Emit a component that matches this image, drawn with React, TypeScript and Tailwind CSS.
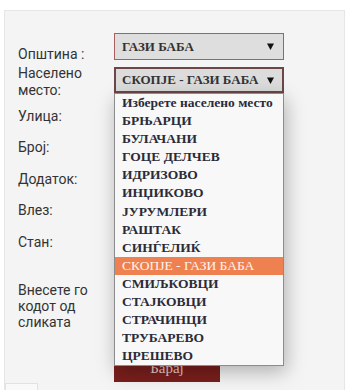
import React from "react";

const items = [
  "Изберете населено место",
  "БРЊАРЦИ",
  "БУЛАЧАНИ",
  "ГОЦЕ ДЕЛЧЕВ",
  "ИДРИЗОВО",
  "ИНЏИКОВО",
  "ЈУРУМЛЕРИ",
  "РАШТАК",
  "СИНЃЕЛИЌ",
  "СКОПЈЕ - ГАЗИ БАБА",
  "СМИЉКОВЦИ",
  "СТАЈКОВЦИ",
  "СТРАЧИНЦИ",
  "ТРУБАРЕВО",
  "ЦРЕШЕВО",
];

function Arrow() {
  return (
    <svg width="7" height="7" viewBox="0 0 7 7" className="shrink-0">
      <polygon points="0,0.5 7,0.5 3.5,7" fill="#111" />
    </svg>
  );
}

export default function App() {
  const serif = { fontFamily: '"Liberation Serif", "DejaVu Serif", serif' };
  return (
    <div className="w-[349px] h-[390px] bg-white overflow-hidden pt-[10px] pl-[4px]">
      <div
        className="w-[341px] h-[420px] bg-[#f4f4f4] border border-[#e6e6e6] pt-[22px] pl-[13px] flex"
        style={{ fontFamily: 'Roboto, "Liberation Sans", sans-serif' }}
      >
        <div className="w-[96px] flex flex-col text-[14px] text-[#333] leading-[16px]">
          <div className="mt-[13px]">Општина :</div>
          <div className="mt-[3px] leading-[17px]">
            Населено
            <br />
            место:
          </div>
          <div className="mt-[9px]">Улица:</div>
          <div className="mt-[15px]">Број:</div>
          <div className="mt-[16px]">Додаток:</div>
          <div className="mt-[15px]">Влез:</div>
          <div className="mt-[16px]">Стан:</div>
          <div className="mt-[32px]">
            Внесете го
            <br />
            кодот од
            <br />
            сликата
          </div>
          <div className="mt-[53px] -ml-[13px] w-[33px] h-[20px] bg-[#f9f9f9] border border-[#e2e2e2]" />
        </div>
        <div className="w-[170px] flex flex-col" style={serif}>
          <div className="h-[27px] bg-[#dedede] border border-[#a95f5f] flex items-center justify-between pl-[7px] pr-[9px] text-[13px] font-bold text-[#333]">
            <span>ГАЗИ БАБА</span>
            <Arrow />
          </div>
          <div className="relative mt-[7px] z-10">
            <div className="h-[26px] bg-[#dcdcdc] border-2 border-[#6b4747] flex items-center justify-between pl-[6px] pr-[8px] text-[13px] font-bold text-[#333]">
              <span>СКОПЈЕ - ГАЗИ БАБА</span>
              <Arrow />
            </div>
            <div className="absolute left-0 top-full w-[170px] bg-[#f8f8f8] border border-[#8c8c8c] shadow-[2px_6px_18px_rgba(0,0,0,0.28)]">
              {items.map((it) => (
                <div
                  key={it}
                  className={
                    it === "СКОПЈЕ - ГАЗИ БАБА"
                      ? "h-[18.1px] leading-[18.1px] pl-[7px] text-[13.5px] bg-[#ef8150] text-[#fff4ee] whitespace-nowrap"
                      : "h-[18.1px] leading-[18.1px] pl-[7px] text-[13.5px] font-bold text-[#2b2b38] whitespace-nowrap"
                  }
                >
                  {it}
                </div>
              ))}
            </div>
          </div>
          <div className="mt-[262px] w-[106px] h-[27px] bg-[#7a1f1c] text-[#e8caca] text-[15px] flex items-center justify-center">
            Барај
          </div>
        </div>
      </div>
    </div>
  );
}
